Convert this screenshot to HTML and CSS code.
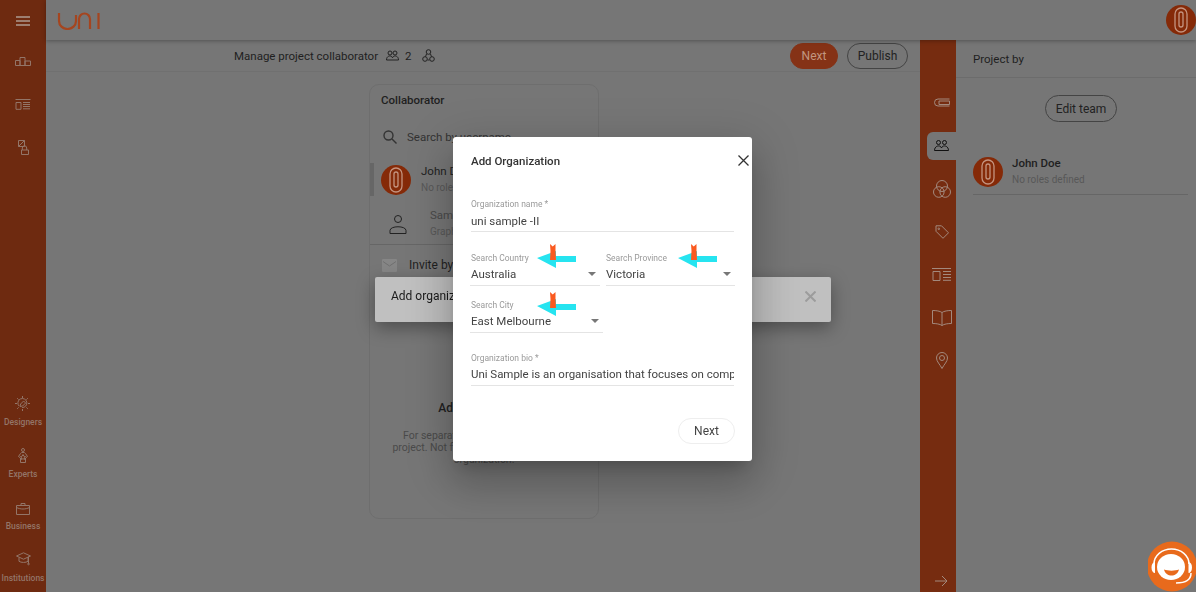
FILE: index.html
```html
<!DOCTYPE html>
<html>

<head>
    <title>Add Organization</title>
    <meta charset="UTF-8">
    <link rel="stylesheet" href="styles.css">
</head>

<body>
    <div class="app">
        <aside class="side-nav">
            <div class="nav-top">
                <svg class="nav-burger" width="14" height="10" viewBox="0 0 14 10"><path d="M0 1h14M0 5h14M0 9h14" /></svg>
                <svg class="nav-icon" width="16" height="9" viewBox="0 0 16 9"><path d="M.5 3.500h4.500v5h-4.500zM5 .5h5v8H5zM10 4h5.500v4.500H10z" /></svg>
                <svg class="nav-icon" width="16" height="11" viewBox="0 0 16 11"><path d="M.5.500h15M1 3.500h5v6.800H1zM8 3.500h7M8 5.500h7M8 7.500h7M8 9.800h7" /></svg>
                <svg class="nav-icon" width="11" height="15" viewBox="0 0 11 15"><path d="M.5.500h6v6h-6zM.5 6.500l6-6M3.500 10h7v4.500h-7zM4.300 10V8a2.200 2.200 0 0 1 4.400 0v2" /></svg>
            </div>
            <div class="nav-bottom">
                <a class="nav-item">
                    <svg class="nav-icon" width="15" height="15" viewBox="0 0 15 15"><path d="M7.500 0v2M7.500 13v2M0 7.500h2M13 7.500h2M2.200 2.200l1.400 1.400M11.400 11.400l1.400 1.400M2.200 12.800l1.400-1.400M11.400 3.600l1.400-1.400M5 10.500l.6-2.500 3-3 2 2-3 3zM7 11.500a4.500 4.500 0 1 0-3-1.500" /></svg>
                    <span>Designers</span>
                </a>
                <a class="nav-item">
                    <svg class="nav-icon" width="10" height="15" viewBox="0 0 10 15"><circle cx="5" cy="2" r="1.500" /><path d="M2.500 5.500C3 4 7 4 7.500 5.500l2 3-2 1.500v4.500h-5V10L.5 8.500zM5 6.500l.9 1.800 1.600.2-1.200 1.200.3 1.800L5 10.700l-1.600.8.300-1.800-1.200-1.200 1.600-.2z" /></svg>
                    <span>Experts</span>
                </a>
                <a class="nav-item">
                    <svg class="nav-icon" width="14" height="12" viewBox="0 0 14 12"><path d="M.5 2.500h13v9H.5zM.5 4.500c4 2 9 2 13 0M5 2.500V.5h4v2" /></svg>
                    <span>Business</span>
                </a>
                <a class="nav-item">
                    <svg class="nav-icon" width="15" height="15" viewBox="0 0 15 15"><path d="M7.500.8L.5 4l7 3.200L14.500 4zM3 5.500v3.800c2 1.500 7 1.500 9 0V5.500M12.500 4.500v7" /><circle cx="12.500" cy="12" r=".8" /></svg>
                    <span>Institutions</span>
                </a>
            </div>
        </aside>

        <div class="main">
            <header class="topbar">
                <svg class="logo" width="43" height="19" viewBox="0 0 43 19"><path d="M2 2v8a8.500 8 0 0 0 17 0V4M22 18V8a5.500 5.500 0 0 1 11 0v10M41.500 2v16" /></svg>
                <svg class="avatar" width="30" height="30" viewBox="0 0 30 30"><circle cx="15" cy="15" r="15" /><path d="M9 9a6 6 0 0 1 12 0v12a6 6 0 0 1-12 0zM13 9a2 2 0 0 1 4 0v11a2 2 0 0 1-4 0z" /></svg>
            </header>

            <div class="body-row">
                <section class="center">
                    <div class="center-bar">
                        <div class="manage">
                            <span>Manage project collaborator</span>
                            <svg class="line-icon" width="13" height="11" viewBox="0 0 13 11"><circle cx="4" cy="3" r="2" /><circle cx="9" cy="3" r="2" /><path d="M.5 10c0-5 5.500-5 6-2 .5-3 6-3 6 2z" /></svg>
                            <span class="manage-count">2</span>
                            <svg class="line-icon" width="13" height="14" viewBox="0 0 13 14"><circle cx="6.500" cy="3" r="2.300" /><circle cx="3" cy="10" r="2.300" /><circle cx="10" cy="10" r="2.300" /><path d="M4.500 5l-1 2.700M8.500 5l1 2.700M5.500 11h2" /></svg>
                        </div>
                        <div class="bar-actions">
                            <button class="btn btn-primary">Next</button>
                            <button class="btn btn-outline">Publish</button>
                        </div>
                    </div>

                    <div class="collab-wrap">
                        <div class="collab-card">
                            <h3>Collaborator</h3>
                            <div class="search-row">
                                <svg class="search-icon" width="14" height="14" viewBox="0 0 14 14"><circle cx="5.500" cy="5.500" r="4.500" /><path d="M9 9l4.500 4.500" /></svg>
                                <span>Search by username</span>
                            </div>
                            <div class="person person-active">
                                <svg class="avatar" width="30" height="30" viewBox="0 0 30 30"><circle cx="15" cy="15" r="15" /><path d="M9 9a6 6 0 0 1 12 0v12a6 6 0 0 1-12 0zM13 9a2 2 0 0 1 4 0v11a2 2 0 0 1-4 0z" /></svg>
                                <div>
                                    <div class="person-name">John Doe</div>
                                    <div class="person-role">No roles defined</div>
                                </div>
                            </div>
                            <div class="person person-second">
                                <svg class="line-icon" width="18" height="20" viewBox="0 0 18 20"><circle cx="9" cy="5" r="3.500" /><path d="M1 19.500v-3c0-5 16-5 16 0v3z" /></svg>
                                <div>
                                    <div class="person-name muted">Sam Smith</div>
                                    <div class="person-role">Graphic designer</div>
                                </div>
                            </div>
                            <div class="invite-row">
                                <svg width="15" height="13" viewBox="0 0 15 13"><rect width="15" height="13" rx="1" fill="#868686" /><path d="M1 2.500l6.500 4.500L14 2.500" fill="none" stroke="#707070" /></svg>
                                <span>Invite by email</span>
                            </div>
                            <div class="empty-state">
                                <div class="empty-title">Add organization</div>
                                <p>For separate teams working on the<br>project. Not for sharing with your whole<br>organization.</p>
                            </div>
                        </div>
                    </div>
                </section>

                <nav class="right-rail">
                    <div class="rail-slot">
                        <svg class="rail-icon" width="16" height="9" viewBox="0 0 16 9"><path d="M15.500 1H4a3.500 3.500 0 0 0 0 7h11.500M5 3h10.500v3.500H5z" /></svg>
                    </div>
                    <div class="rail-slot">
                        <div class="rail-tab">
                            <svg class="line-icon tab-icon" width="15" height="11" viewBox="0 0 15 11"><circle cx="4.500" cy="2.500" r="2" /><circle cx="10.500" cy="2.500" r="2" /><path d="M.5 10.500c0-5 6-6 7-2.500 1-3.500 7-2.500 7 2.500z" /></svg>
                        </div>
                    </div>
                    <div class="rail-slot">
                        <svg class="rail-icon" width="18" height="18" viewBox="0 0 18 18"><circle cx="9" cy="6" r="5.500" /><circle cx="5.800" cy="12" r="5.300" /><circle cx="12.200" cy="12" r="5.300" /></svg>
                    </div>
                    <div class="rail-slot">
                        <svg class="rail-icon" width="14" height="14" viewBox="0 0 14 14"><path d="M1 .8h5.500l7 7-5.500 5.500-7-7z" /><circle cx="3.800" cy="3.800" r=".8" /></svg>
                    </div>
                    <div class="rail-slot">
                        <svg class="rail-icon" width="19" height="13" viewBox="0 0 19 13"><path d="M0 .5h19M1 3.500h7v9H1zM11 3.500h8M11 6.500h8M11 9.500h8M11 12.300h8" /></svg>
                    </div>
                    <div class="rail-slot">
                        <svg class="rail-icon" width="20" height="16" viewBox="0 0 20 16"><path d="M10 2.500C8 1 4 .5.500.5v13c3.500 0 7.500.5 9.500 2 2-1.500 6-2 9.500-2V.5C16 .5 12 1 10 2.500zM10 2.500v13" /></svg>
                    </div>
                    <div class="rail-slot">
                        <svg class="rail-icon" width="12" height="17" viewBox="0 0 12 17"><path d="M6 16.500C4 12.500.5 9.500.5 6a5.500 5.500 0 0 1 11 0c0 3.500-3.500 6.500-5.500 10.500z" /><circle cx="6" cy="6" r="2.500" /></svg>
                    </div>
                    <svg class="rail-icon rail-arrow" width="13" height="12" viewBox="0 0 13 12"><path d="M0 6h12M7 1l5 5-5 5" /></svg>
                </nav>

                <aside class="project-panel">
                    <div class="project-head">Project by</div>
                    <div class="project-edit"><button class="btn btn-outline">Edit team</button></div>
                    <div class="project-person">
                        <svg class="avatar" width="30" height="30" viewBox="0 0 30 30"><circle cx="15" cy="15" r="15" /><path d="M9 9a6 6 0 0 1 12 0v12a6 6 0 0 1-12 0zM13 9a2 2 0 0 1 4 0v11a2 2 0 0 1-4 0z" /></svg>
                        <div>
                            <div class="person-name strong">John Doe</div>
                            <div class="person-role">No roles defined</div>
                        </div>
                    </div>
                </aside>
            </div>
        </div>
    </div>

    <div class="toast">
        <span>Add organization</span>
        <svg width="11" height="11" viewBox="0 0 11 11"><path d="M.5.500l10 10M10.500.500l-10 10" /></svg>
    </div>

    <div class="dialog">
        <div class="dialog-head">
            <h2>Add Organization</h2>
            <svg class="dialog-close" width="11" height="11" viewBox="0 0 11 11"><path d="M.5.500l10 10M10.500.500l-10 10" /></svg>
        </div>

        <div class="field field-name">
            <label>Organization name *</label>
            <div class="field-value">uni sample -II</div>
        </div>

        <div class="field-row">
            <div class="field field-country">
                <label>Search Country</label>
                <div class="field-value">Australia<i class="caret"></i></div>
                <svg class="mark" width="40" height="25" viewBox="0 0 40 25"><path class="mark-arrow" d="M0 14L19 7v5h20v6H19v6z" /><path class="mark-flag" d="M13 0l2.700 2.500L18.500 0v7l.5 9h-6l.5-9z" /></svg>
            </div>
            <div class="field field-province">
                <label>Search Province</label>
                <div class="field-value">Victoria<i class="caret"></i></div>
                <svg class="mark" width="40" height="25" viewBox="0 0 40 25"><path class="mark-arrow" d="M0 14L19 7v5h20v6H19v6z" /><path class="mark-flag" d="M13 0l2.700 2.500L18.500 0v7l.5 9h-6l.5-9z" /></svg>
            </div>
        </div>

        <div class="field field-city">
            <label>Search City</label>
            <div class="field-value">East Melbourne<i class="caret"></i></div>
            <svg class="mark" width="40" height="25" viewBox="0 0 40 25"><path class="mark-arrow" d="M0 14L19 7v5h20v6H19v6z" /><path class="mark-flag" d="M13 0l2.700 2.500L18.500 0v7l.5 9h-6l.5-9z" /></svg>
        </div>

        <div class="field field-bio">
            <label>Organization bio *</label>
            <div class="field-value">Uni Sample is an organisation that focuses on comp</div>
        </div>

        <div class="dialog-foot">
            <button class="btn btn-light">Next</button>
        </div>
    </div>

    <div class="chat-widget">
        <svg width="48" height="51" viewBox="0 0 48 51">
            <circle cx="24" cy="25.500" r="25" fill="#e86a1c" />
            <path d="M6 23a17.500 15 0 0 1 35 0" fill="none" stroke="#fff" stroke-width="1.500" />
            <ellipse cx="23" cy="26" rx="14" ry="13" fill="#fff" />
            <path d="M7 21v11a3.500 5.500 0 0 1 0-11zM40.500 21a3.500 5.500 0 0 1 0 11z" fill="#fff" />
            <path d="M16 28.500c2 8 13 8 15 0-4 1.500-11 1.500-15 0z" fill="#e86a1c" />
            <path d="M43 32c0 6-5 10-15 10" fill="none" stroke="#fff" stroke-width="1.500" />
        </svg>
    </div>
</body>

</html>
```

FILE: styles.css
```css
* {
    box-sizing: border-box;
}

html,
body {
    margin: 0;
    height: 100%;
    overflow: hidden;
}

body {
    font-family: Roboto, "Liberation Sans", sans-serif;
    font-size: 12px;
    color: #1f1f1f;
    background-color: #767676;
}

svg {
    display: block;
    flex-shrink: 0;
}

button {
    font-family: inherit;
}

.app {
    display: flex;
    height: 592px;
}

/* left nav */
.side-nav {
    width: 46px;
    background-color: #6e2a10;
    display: flex;
    flex-direction: column;
    justify-content: space-between;
    align-items: center;
    padding: 16px 0 8px;
}

.nav-top {
    display: flex;
    flex-direction: column;
    align-items: center;
}

.nav-burger {
    margin-bottom: 31px;
    fill: none;
    stroke: #ad9a90;
    stroke-width: 1.400;
}

.nav-icon {
    fill: none;
    stroke: #937568;
    stroke-width: 1;
}

.nav-top .nav-icon {
    margin-bottom: 33px;
}

.nav-top .nav-icon:nth-child(3) {
    margin-bottom: 30px;
}

.nav-bottom {
    display: flex;
    flex-direction: column;
    align-items: center;
}

.nav-item {
    height: 52px;
    display: flex;
    flex-direction: column;
    align-items: center;
    justify-content: flex-end;
    gap: 6px;
    font-size: 8.500px;
    line-height: 11px;
    font-weight: 500;
    color: #937568;
    white-space: nowrap;
}

/* main */
.main {
    flex: 1;
    min-width: 0;
    display: flex;
    flex-direction: column;
}

.topbar {
    height: 40px;
    display: flex;
    align-items: center;
    justify-content: space-between;
    padding: 0 0 0 11px;
    box-shadow: 0 1px 4px rgba(0, 0, 0, 0.3);
    position: relative;
    z-index: 1;
}

.logo {
    fill: none;
    stroke: #a5451f;
    stroke-width: 2.200;
}

.avatar circle {
    fill: #852a08;
}

.avatar path {
    fill: none;
    stroke: #c49480;
    stroke-width: 1.300;
}

.body-row {
    flex: 1;
    display: flex;
    min-height: 0;
}

.center {
    flex: 1;
    min-width: 0;
    display: flex;
    flex-direction: column;
}

.center-bar {
    height: 32px;
    display: flex;
    align-items: center;
    justify-content: space-between;
    padding: 0 12px 0 188px;
    border-bottom: 1px solid #707070;
}

.manage {
    display: flex;
    align-items: center;
    gap: 8px;
    font-size: 11.500px;
}

.manage-count {
    margin: 0 2px 0 -2px;
}

.line-icon {
    fill: none;
    stroke: #222222;
    stroke-width: 1;
}

.search-icon {
    fill: none;
    stroke: #333333;
    stroke-width: 1.400;
}

.bar-actions {
    display: flex;
    gap: 9px;
}

.btn {
    height: 26px;
    border-radius: 13px;
    font-size: 12px;
    padding: 0;
    background: none;
    border: 1px solid #444444;
    color: #222222;
}

.btn-primary {
    width: 48px;
    background-color: #853216;
    border-color: #853216;
    color: #c29680;
}

.btn-outline {
    width: 61px;
}

.collab-wrap {
    padding: 12px 0 0 323px;
}

.collab-card {
    width: 230px;
    height: 435px;
    border: 1px solid #6e6e6e;
    border-radius: 10px;
}

.collab-card h3 {
    margin: 0;
    padding: 8px 11px 0;
    font-size: 11.500px;
    font-weight: 500;
    line-height: 14px;
}

.search-row {
    display: flex;
    align-items: center;
    gap: 10px;
    padding: 23px 13px 0;
    font-size: 11.500px;
    color: #333333;
}

.person {
    display: flex;
    align-items: center;
}

.person-active {
    margin-top: 19px;
    padding-left: 11px;
    gap: 10px;
    position: relative;
}

.person-active::before {
    content: "";
    position: absolute;
    left: 0;
    top: 0;
    width: 4px;
    height: 33px;
    background-color: #666666;
}

.person-second {
    margin-top: 11px;
    padding: 0 0 4px 19px;
    gap: 23px;
    border-bottom: 1px solid #666666;
}

.person-name {
    margin-top: 1px;
    font-size: 11.500px;
    line-height: 15px;
}

.person-name.muted {
    color: #4a4a4a;
}

.person-name.strong {
    font-weight: 500;
}

.person-role {
    margin-top: 1px;
    font-size: 10px;
    line-height: 16px;
    color: #585858;
}

.invite-row {
    display: flex;
    align-items: center;
    gap: 12px;
    padding: 13px 0 0 12px;
}

.empty-state {
    margin-top: 129px;
    padding: 0 12px;
    text-align: center;
}

.empty-title {
    font-size: 12px;
    line-height: 14px;
    font-weight: 500;
    margin-bottom: 15px;
}

.empty-state p {
    margin: 0;
    font-size: 10.500px;
    line-height: 12px;
    color: #4a4a4a;
}

/* right rail */
.right-rail {
    width: 36px;
    background-color: #762c10;
    padding: 41px 0 0 7px;
    position: relative;
}

.rail-slot {
    height: 43px;
    display: flex;
    align-items: center;
    justify-content: center;
}

.rail-icon {
    fill: none;
    stroke: #a3897d;
    stroke-width: 1;
}

.rail-tab {
    width: 29px;
    height: 28px;
    background-color: #767676;
    border-radius: 6px 0 0 6px;
    display: flex;
    align-items: center;
    justify-content: center;
}

.tab-icon {
    stroke: #111111;
}

.rail-arrow {
    position: absolute;
    bottom: 5px;
    left: 15px;
}

.project-panel {
    width: 240px;
}

.project-head {
    height: 38px;
    padding: 12px 0 0 17px;
    font-size: 11.500px;
    border-bottom: 1px solid #6c6c6c;
}

.project-edit {
    display: flex;
    justify-content: center;
    padding: 17px 0 0 10px;
}

.project-edit .btn {
    width: 72px;
    height: 27px;
    border-radius: 14px;
}

.project-person {
    display: flex;
    align-items: center;
    gap: 9px;
    margin: 33px 8px 0 17px;
    padding-bottom: 6px;
    border-bottom: 1px solid #666666;
}

/* overlay */
.toast {
    position: fixed;
    z-index: 2;
    left: 375px;
    top: 277px;
    width: 456px;
    height: 45px;
    padding: 12px 15px 0 16px;
    display: flex;
    align-items: flex-start;
    justify-content: space-between;
    line-height: 14px;
    background-color: #c0c0c0;
    border-radius: 2px;
    box-shadow: 0 6px 18px rgba(0, 0, 0, 0.35);
    color: #1a1a1a;
}

.toast svg {
    margin-top: 2px;
}

.toast path {
    fill: none;
    stroke: #9c9c9c;
    stroke-width: 2;
}

.dialog {
    position: fixed;
    z-index: 3;
    left: 453px;
    top: 137px;
    width: 299px;
    height: 324px;
    padding: 0 18px;
    background-color: #ffffff;
    border-radius: 3px;
    box-shadow: 0 11px 15px -7px rgba(0, 0, 0, 0.2), 0 24px 38px 3px rgba(0, 0, 0, 0.14), 0 9px 46px 8px rgba(0, 0, 0, 0.12);
}

.dialog-head {
    height: 48px;
    display: flex;
    align-items: center;
}

.dialog-head h2 {
    margin: 0;
    font-size: 11.500px;
    font-weight: 500;
    color: #333333;
}

.dialog-close {
    position: absolute;
    right: 3px;
    top: 18px;
}

.dialog-close path {
    fill: none;
    stroke: #333333;
    stroke-width: 1.300;
}

.field {
    position: relative;
    border-bottom: 1px solid #e4e4e4;
}

.field label {
    display: block;
    font-size: 8.500px;
    line-height: 11px;
    color: #9a9a9a;
}

.field-value {
    display: flex;
    justify-content: space-between;
    align-items: center;
    font-size: 11.500px;
    line-height: 16px;
    height: 21px;
    padding-bottom: 1px;
    color: #444444;
    white-space: nowrap;
    overflow: hidden;
}

.caret {
    width: 0;
    height: 0;
    margin-right: 4px;
    border-left: 4px solid transparent;
    border-right: 4px solid transparent;
    border-top: 4px solid #777777;
}

.field-name {
    margin-top: 14px;
}

.field-name .field-value {
    padding-top: 1px;
}

.field-row {
    display: flex;
    gap: 6px;
    margin: 21px -1px 0 -1px;
}

.field-country label,
.field-country .field-value,
.field-city label,
.field-city .field-value {
    padding-left: 1px;
}

.field-country {
    width: 130px;
}

.field-province {
    width: 129px;
}

.field-city {
    width: 133px;
    margin: 14px 0 0 -1px;
}

.field-bio {
    margin-top: 20px;
}

.field-bio .field-value {
    padding-bottom: 2px;
    letter-spacing: -0.03px;
}

/* annotation arrow */
.mark {
    position: absolute;
    left: 67px;
    top: -9px;
}

.field-province .mark {
    left: 72px;
}

.field-city .mark {
    top: -8px;
}

.mark-arrow {
    fill: #26e4f0;
}

.mark-flag {
    fill: #fa5a20;
}

.dialog-foot {
    display: flex;
    justify-content: flex-end;
    margin: 32px -1px 0 0;
}

.btn-light {
    width: 57px;
    border-color: #eeeeee;
    color: #444444;
    background-color: #ffffff;
}

.chat-widget {
    position: fixed;
    z-index: 4;
    right: 0;
    bottom: 0;
    width: 48px;
    height: 51px;
}
```
